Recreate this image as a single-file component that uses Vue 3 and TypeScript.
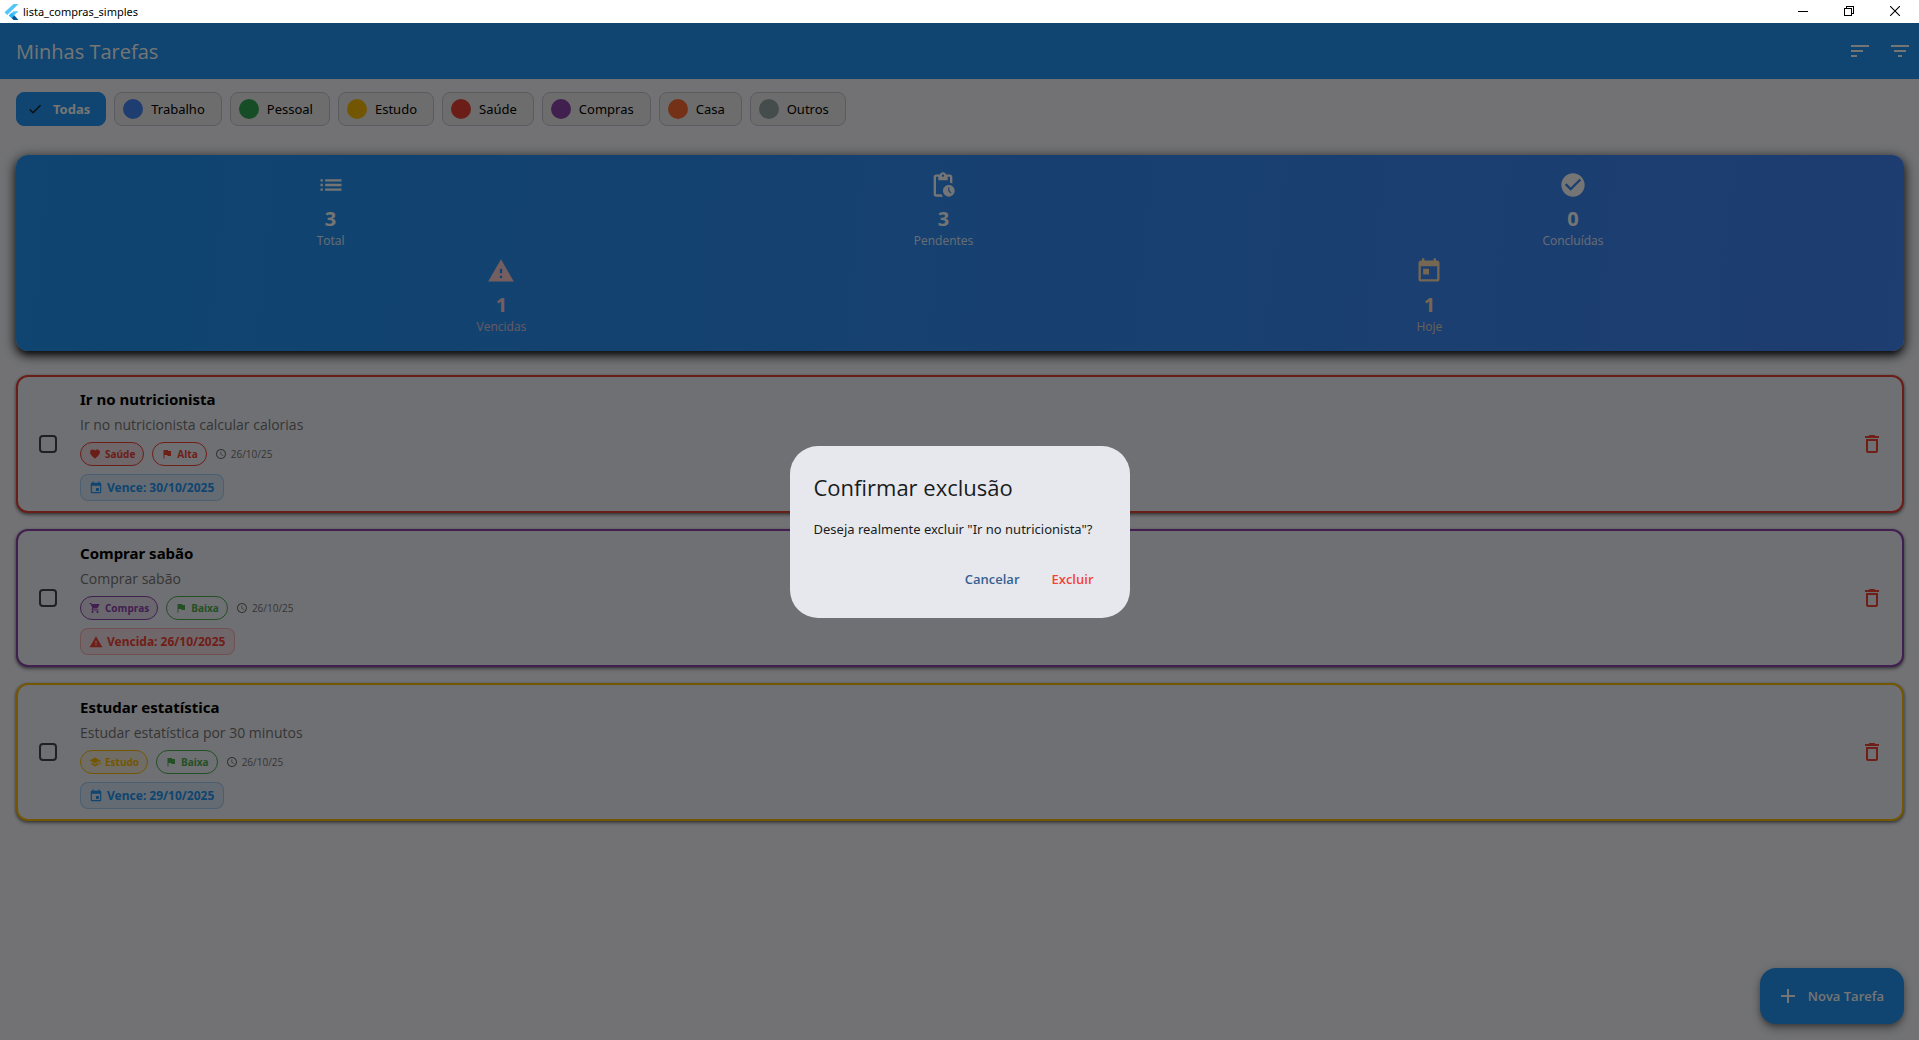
<script setup lang="ts">
import { ref } from 'vue'

interface Category {
  name: string
  color: string
}

interface Stat {
  icon: string
  value: number
  label: string
  tone: string
}

interface Task {
  id: number
  title: string
  description: string
  category: string
  color: string
  tint: string
  icon: string
  priority: string
  priorityColor: string
  created: string
  due: string
  overdue: boolean
}

const icons: Record<string, string> = {
  sort: 'M3 18h6v-2H3v2zM3 6v2h18V6H3zm0 7h12v-2H3v2z',
  filter: 'M10 18h4v-2h-4v2zM3 6v2h18V6H3zm3 7h12v-2H6v2z',
  check: 'M9 16.17L4.83 12l-1.42 1.41L9 19 21 7l-1.41-1.41z',
  list: 'M3 13h2v-2H3v2zm0 4h2v-2H3v2zm0-8h2V7H3v2zm4 4h14v-2H7v2zm0 4h14v-2H7v2zM7 7v2h14V7H7z',
  pending:
    'M17 12c-2.76 0-5 2.24-5 5s2.24 5 5 5 5-2.24 5-5-2.24-5-5-5zm1.65 7.35L16.5 17.2V14h1v2.79l1.85 1.85-.7.71zM18 3h-3.18C14.4 1.84 13.3 1 12 1s-2.4.84-2.82 2H6c-1.1 0-2 .9-2 2v15c0 1.1.9 2 2 2h6.11a6.743 6.743 0 0 1-1.42-2H6V5h2v3h8V5h2v5.08c.71.1 1.38.31 2 .6V5c0-1.1-.9-2-2-2zm-6 2c-.55 0-1-.45-1-1s.45-1 1-1 1 .45 1 1-.45 1-1 1z',
  done: 'M12 2C6.48 2 2 6.48 2 12s4.48 10 10 10 10-4.48 10-10S17.52 2 12 2zm-2 15l-5-5 1.41-1.41L10 14.17l7.59-7.59L19 8l-9 9z',
  warning: 'M1 21h22L12 2 1 21zm12-3h-2v-2h2v2zm0-4h-2v-4h2v4z',
  today:
    'M19 3h-1V1h-2v2H8V1H6v2H5c-1.11 0-1.99.9-1.99 2L3 19c0 1.1.89 2 2 2h14c1.1 0 2-.9 2-2V5c0-1.1-.9-2-2-2zm0 16H5V8h14v11zM7 10h5v5H7z',
  event:
    'M17 12h-5v5h5v-5zM16 1v2H8V1H6v2H5c-1.11 0-1.99.9-1.99 2L3 19c0 1.1.89 2 2 2h14c1.1 0 2-.9 2-2V5c0-1.1-.9-2-2-2h-1V1h-2zm3 18H5V8h14v11z',
  heart:
    'M12 21.35l-1.45-1.32C5.4 15.36 2 12.28 2 8.5 2 5.42 4.42 3 7.5 3c1.74 0 3.41.81 4.5 2.09C13.09 3.81 14.76 3 16.5 3 19.58 3 22 5.42 22 8.5c0 3.78-3.4 6.86-8.55 11.54L12 21.35z',
  cart: 'M7 18c-1.1 0-1.99.9-1.99 2S5.9 22 7 22s2-.9 2-2-.9-2-2-2zM1 2v2h2l3.6 7.59-1.35 2.45c-.16.28-.25.61-.25.96 0 1.1.9 2 2 2h12v-2H7.42c-.14 0-.25-.11-.25-.25l.03-.12.9-1.63h7.45c.75 0 1.41-.41 1.75-1.03l3.58-6.49A1.003 1.003 0 0 0 20 4H5.21l-.94-2H1zm16 16c-1.1 0-1.99.9-1.99 2s.89 2 1.99 2 2-.9 2-2-.9-2-2-2z',
  school: 'M5 13.18v4L12 21l7-3.82v-4L12 17l-7-3.82zM12 3L1 9l11 6 9-4.91V17h2V9L12 3z',
  flag: 'M14.4 6L14 4H5v17h2v-7h5.6l.4 2h7V6z',
  clock:
    'M11.99 2C6.47 2 2 6.48 2 12s4.47 10 9.99 10C17.52 22 22 17.52 22 12S17.52 2 11.99 2zM12 20c-4.42 0-8-3.58-8-8s3.58-8 8-8 8 3.58 8 8-3.58 8-8 8zm.5-13H11v6l5.25 3.15.75-1.23-4.5-2.67z',
  trash: 'M6 19c0 1.1.9 2 2 2h8c1.1 0 2-.9 2-2V7H6v12zM8 9h8v10H8V9zm7.5-5l-1-1h-5l-1 1H5v2h14V4z',
  add: 'M19 13h-6v6h-2v-6H5v-2h6V5h2v6h6v2z',
}

const categories: Category[] = [
  { name: 'Trabalho', color: '#4285f4' },
  { name: 'Pessoal', color: '#34a853' },
  { name: 'Estudo', color: '#fbbc04' },
  { name: 'Saúde', color: '#ea4335' },
  { name: 'Compras', color: '#8e44ad' },
  { name: 'Casa', color: '#ff6b35' },
  { name: 'Outros', color: '#95a5a6' },
]

const statRows: Stat[][] = [
  [
    { icon: 'list', value: 3, label: 'Total', tone: 'plain' },
    { icon: 'pending', value: 3, label: 'Pendentes', tone: 'plain' },
    { icon: 'done', value: 0, label: 'Concluídas', tone: 'plain' },
  ],
  [
    { icon: 'warning', value: 1, label: 'Vencidas', tone: 'late' },
    { icon: 'today', value: 1, label: 'Hoje', tone: 'now' },
  ],
]

const tasks: Task[] = [
  {
    id: 1,
    title: 'Ir no nutricionista',
    description: 'Ir no nutricionista calcular calorias',
    category: 'Saúde',
    color: '#ea4335',
    tint: 'rgba(234, 67, 53, 0.1)',
    icon: 'heart',
    priority: 'Alta',
    priorityColor: '#f44336',
    created: '26/10/25',
    due: '30/10/2025',
    overdue: false,
  },
  {
    id: 2,
    title: 'Comprar sabão',
    description: 'Comprar sabão',
    category: 'Compras',
    color: '#8e44ad',
    tint: 'rgba(142, 68, 173, 0.1)',
    icon: 'cart',
    priority: 'Baixa',
    priorityColor: '#4caf50',
    created: '26/10/25',
    due: '26/10/2025',
    overdue: true,
  },
  {
    id: 3,
    title: 'Estudar estatística',
    description: 'Estudar estatística por 30 minutos',
    category: 'Estudo',
    color: '#fbbc04',
    tint: 'rgba(251, 188, 4, 0.1)',
    icon: 'school',
    priority: 'Baixa',
    priorityColor: '#4caf50',
    created: '26/10/25',
    due: '29/10/2025',
    overdue: false,
  },
]

const selected = ref('Todas')
const dialogOpen = ref(true)
</script>

<template>
  <div class="window">
    <header class="titlebar">
      <svg class="logo" viewBox="0 0 16 18" aria-hidden="true">
        <path d="M10.5 1H15.5L4.2 12 1.5 9.3z" fill="#54c5f8" />
        <path d="M10.5 8.2H15.5L11.2 12.3 8.5 15 5.8 12.4z" fill="#54c5f8" />
        <path d="M8.5 15L11.2 12.3 15.5 17H10.5z" fill="#01579b" />
        <path d="M5.8 12.4L8.5 9.8 11.2 12.4 8.5 15z" fill="#29b6f6" />
      </svg>
      <span class="app-name">lista_compras_simples</span>
      <div class="controls">
        <button type="button" aria-label="Minimizar">
          <svg viewBox="0 0 10 10" shape-rendering="crispEdges"><path d="M0 5h10v1H0z" fill="#000" /></svg>
        </button>
        <button type="button" aria-label="Restaurar">
          <svg viewBox="0 0 10 10" shape-rendering="crispEdges">
            <path d="M0 2h8v8H0zM1 3v6h6V3zM2 0h8v8H8V7h1V1H3v1H2z" fill="#000" fill-rule="evenodd" />
          </svg>
        </button>
        <button type="button" aria-label="Fechar">
          <svg viewBox="0 0 10 10"><path d="M0 0L10 10M10 0L0 10" stroke="#000" stroke-width="1.1" /></svg>
        </button>
      </div>
    </header>

    <div class="client">
      <header class="appbar">
        <h1>Minhas Tarefas</h1>
        <button type="button" aria-label="Ordenar">
          <svg viewBox="0 0 24 24"><path :d="icons.sort" /></svg>
        </button>
        <button type="button" aria-label="Filtrar">
          <svg viewBox="0 0 24 24"><path :d="icons.filter" /></svg>
        </button>
      </header>

      <main class="content">
        <nav class="filters" aria-label="Categorias">
          <button
            type="button"
            class="filter"
            :class="{ active: selected === 'Todas' }"
            @click="selected = 'Todas'"
          >
            <svg viewBox="0 0 24 24"><path :d="icons.check" /></svg>
            Todas
          </button>
          <button
            v-for="c in categories"
            :key="c.name"
            type="button"
            class="filter"
            :class="{ active: selected === c.name }"
            @click="selected = c.name"
          >
            <span class="dot" :style="{ background: c.color }"></span>
            {{ c.name }}
          </button>
        </nav>

        <section class="stats" aria-label="Resumo">
          <div v-for="(row, i) in statRows" :key="i" class="stat-row">
            <div v-for="s in row" :key="s.label" class="stat" :class="s.tone">
              <svg viewBox="0 0 24 24"><path :d="icons[s.icon]" /></svg>
              <strong>{{ s.value }}</strong>
              <span>{{ s.label }}</span>
            </div>
          </div>
        </section>

        <ul class="tasks">
          <li v-for="t in tasks" :key="t.id" class="task" :style="{ borderColor: t.color }">
            <input :id="'task-' + t.id" type="checkbox" />
            <div class="body">
              <label class="title" :for="'task-' + t.id">{{ t.title }}</label>
              <p class="desc">{{ t.description }}</p>
              <div class="tags">
                <span class="tag" :style="{ color: t.color, background: t.tint }">
                  <svg viewBox="0 0 24 24"><path :d="icons[t.icon]" /></svg>{{ t.category }}
                </span>
                <span class="tag" :style="{ color: t.priorityColor }">
                  <svg viewBox="0 0 24 24"><path :d="icons.flag" /></svg>{{ t.priority }}
                </span>
                <span class="created">
                  <svg viewBox="0 0 24 24"><path :d="icons.clock" /></svg>{{ t.created }}
                </span>
              </div>
              <span class="due" :class="{ overdue: t.overdue }">
                <svg viewBox="0 0 24 24"><path :d="icons[t.overdue ? 'warning' : 'event']" /></svg>
                {{ t.overdue ? 'Vencida' : 'Vence' }}: {{ t.due }}
              </span>
            </div>
            <button type="button" class="remove" :aria-label="'Excluir ' + t.title" @click="dialogOpen = true">
              <svg viewBox="0 0 24 24"><path :d="icons.trash" /></svg>
            </button>
          </li>
        </ul>
      </main>

      <button type="button" class="fab">
        <svg viewBox="0 0 24 24"><path :d="icons.add" /></svg>
        Nova Tarefa
      </button>

      <div v-if="dialogOpen" class="scrim">
        <section class="dialog" role="alertdialog" aria-modal="true" aria-labelledby="dialog-title">
          <h2 id="dialog-title">Confirmar exclusão</h2>
          <p>Deseja realmente excluir "Ir no nutricionista"?</p>
          <div class="actions">
            <button type="button" @click="dialogOpen = false">Cancelar</button>
            <button type="button" class="danger" @click="dialogOpen = false">Excluir</button>
          </div>
        </section>
      </div>
    </div>
  </div>
</template>

<style>
body {
  margin: 0;
  background: #f8f9ff;
}
</style>

<style scoped>
.window {
  display: flex;
  flex-direction: column;
  min-height: 100vh;
  font-family: 'Open Sans', 'Noto Sans', sans-serif;
  color: #000;
}

.window *,
.window *::before {
  box-sizing: border-box;
}

button {
  font: inherit;
  border: 0;
  padding: 0;
  background: none;
  cursor: pointer;
}

svg {
  display: block;
  flex: none;
  fill: currentColor;
}

.app-name,
.filter,
.title,
.due,
.dialog p {
  font-family: 'Noto Sans', 'Open Sans', sans-serif;
}

.titlebar {
  display: flex;
  align-items: center;
  height: 23px;
  padding: 0 1px 0 3px;
  background: #fff;
}

.logo {
  width: 16px;
  height: 18px;
}

.app-name {
  flex: 1;
  margin-left: 4px;
  font-size: 11px;
  line-height: 16px;
}

.controls {
  display: flex;
  height: 100%;
}

.controls button {
  display: grid;
  place-items: center;
  width: 46px;
  padding-bottom: 2px;
}

.controls svg {
  width: 10px;
  height: 10px;
}

.client {
  position: relative;
  flex: 1;
  background: #f8f9ff;
}

.appbar {
  display: flex;
  align-items: center;
  height: 56px;
  padding-left: 16px;
  background: #2196f3;
  color: #fff;
}

.appbar h1 {
  flex: 1;
  margin: 0;
  padding-top: 2px;
  font-size: 20px;
  line-height: 28px;
  font-weight: 400;
}

.appbar button {
  display: grid;
  place-items: center;
  width: 40px;
  height: 40px;
  padding-left: 2px;
  color: #fff;
}

.appbar svg {
  width: 24px;
  height: 24px;
}

.content {
  padding: 13px 15px 16px 16px;
}

.filters {
  display: flex;
  flex-wrap: wrap;
  gap: 8px;
}

.filter {
  display: flex;
  align-items: center;
  gap: 8px;
  height: 34px;
  padding: 0 16px 0 8px;
  border: 1px solid #c3c7cf;
  border-radius: 8px;
  background: #eee;
  font-size: 13px;
  line-height: 20px;
  color: #000;
}

.filter.active {
  padding-right: 15px;
  border-color: #2196f3;
  background: #2196f3;
  color: #fff;
  font-weight: 700;
}

.filter svg {
  width: 20px;
  height: 20px;
  padding: 2px;
  color: #191c20;
}

.dot {
  width: 20px;
  height: 20px;
  border-radius: 50%;
}

.stats {
  display: flex;
  flex-direction: column;
  gap: 8px;
  margin-top: 29px;
  padding: 16px;
  border-radius: 12px;
  background: linear-gradient(96deg, #2196f3, #4285f4);
  box-shadow:
    0 5px 5px -3px rgba(0, 0, 0, 0.6),
    0 4px 10px 1px rgba(0, 0, 0, 0.6),
    0 3px 14px 2px rgba(0, 0, 0, 0.3);
}

.stat-row {
  display: flex;
  justify-content: space-around;
}

.stat {
  display: flex;
  flex-direction: column;
  align-items: center;
  color: #fff;
}

.stat.late {
  color: #ffcdd2;
}

.stat.now {
  color: #ffe0b2;
}

.stat svg {
  width: 28px;
  height: 28px;
}

.stat strong {
  margin-top: 6px;
  font-size: 20px;
  line-height: 28px;
  font-weight: 700;
}

.stat span {
  font-size: 12px;
  line-height: 16px;
  opacity: 0.85;
}

.tasks {
  display: flex;
  flex-direction: column;
  gap: 16px;
  margin: 24px 0 0;
  padding: 0;
  list-style: none;
}

.task {
  display: flex;
  align-items: center;
  padding: 10px 18px 10px 21px;
  border: 2px solid;
  border-radius: 12px;
  background: #f2f3fa;
  box-shadow:
    0 1px 3px rgba(0, 0, 0, 0.4),
    0 2px 4px rgba(0, 0, 0, 0.3);
}

.task input {
  appearance: none;
  flex: none;
  width: 18px;
  height: 18px;
  margin: 0 23px 0 0;
  border: 2px solid #43474e;
  border-radius: 4px;
}

.body {
  flex: 1;
}

.title {
  display: block;
  font-size: 15px;
  line-height: 24px;
  font-weight: 700;
}

.desc {
  margin: 4px 0 7px;
  font-size: 14px;
  line-height: 20px;
  color: #757575;
}

.tags {
  display: flex;
  align-items: center;
  gap: 8px;
  margin-bottom: 8px;
}

.tag {
  display: flex;
  align-items: center;
  gap: 4px;
  height: 24px;
  padding: 0 8px;
  border: 1px solid currentColor;
  border-radius: 12px;
  font-size: 10px;
  line-height: 16px;
  font-weight: 700;
}

.created {
  display: flex;
  align-items: center;
  gap: 4px;
  font-size: 10px;
  line-height: 16px;
  color: #757575;
}

.tag svg,
.created svg {
  width: 12px;
  height: 12px;
}

.due {
  display: flex;
  align-items: center;
  gap: 4px;
  width: fit-content;
  height: 27px;
  padding: 0 9px 0 8px;
  border: 1px solid rgba(33, 150, 243, 0.3);
  border-radius: 8px;
  background: rgba(33, 150, 243, 0.1);
  color: #2196f3;
  font-size: 12px;
  line-height: 16px;
  font-weight: 700;
}

.due.overdue {
  border-color: rgba(244, 67, 54, 0.3);
  background: rgba(244, 67, 54, 0.1);
  color: #f44336;
}

.due svg {
  width: 14px;
  height: 14px;
}

.remove {
  color: #f44336;
}

.remove svg {
  width: 24px;
  height: 24px;
}

.fab {
  position: absolute;
  right: 15px;
  bottom: 16px;
  display: flex;
  align-items: center;
  gap: 8px;
  height: 56px;
  padding: 0 20px 0 16px;
  border-radius: 16px;
  background: #2196f3;
  color: #fff;
  font-size: 13px;
  line-height: 20px;
  font-weight: 600;
  box-shadow:
    0 3px 5px -1px rgba(0, 0, 0, 0.3),
    0 6px 10px rgba(0, 0, 0, 0.2),
    0 1px 12px rgba(0, 0, 0, 0.14);
}

.fab svg {
  width: 24px;
  height: 24px;
}

.scrim {
  position: absolute;
  inset: 0;
  display: flex;
  align-items: center;
  justify-content: center;
  background: rgba(0, 0, 0, 0.54);
}

.dialog {
  min-width: 340px;
  padding: 25px 24px 23px;
  border-radius: 28px;
  background: #e7e8ee;
  color: #191c20;
}

.dialog h2 {
  margin: 0 0 16px;
  font-size: 22px;
  line-height: 32px;
  font-weight: 400;
}

.dialog p {
  margin: 0 0 24px;
  font-size: 13px;
  line-height: 20px;
}

.actions {
  display: flex;
  justify-content: flex-end;
  gap: 8px;
}

.actions button {
  height: 32px;
  padding: 0 12px;
  border-radius: 16px;
  color: #36618e;
  font-size: 13px;
  line-height: 20px;
  font-weight: 600;
}

.actions .danger {
  color: #f44336;
}
</style>
